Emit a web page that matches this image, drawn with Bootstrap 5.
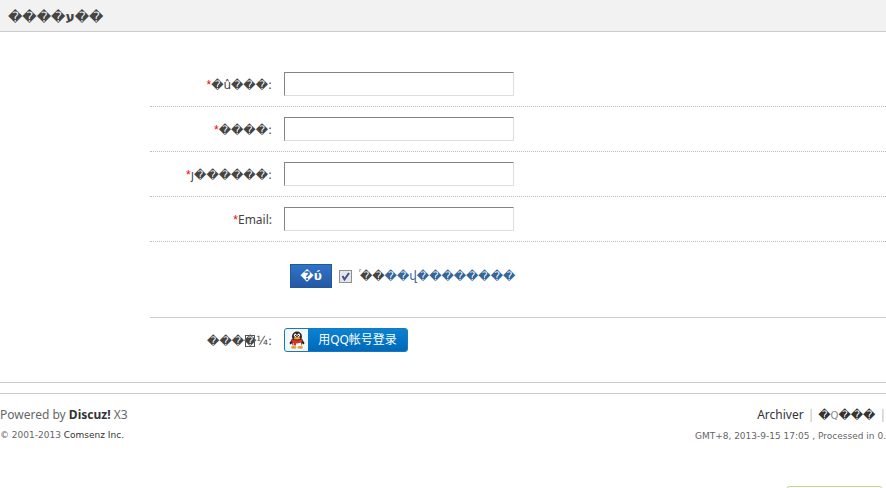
<!DOCTYPE html>
<html lang="zh-CN">
<head>
<meta charset="utf-8">
<meta name="viewport" content="width=device-width, initial-scale=1">
<title>Discuz!</title>
<link rel="stylesheet" href="https://cdn.jsdelivr.net/npm/bootstrap@5.3.0/dist/css/bootstrap.min.css">
<style>
body{font:12px/18px "Noto Sans","DejaVu Sans","Noto Sans CJK SC",sans-serif;color:#444;background:#fff;overflow:hidden}
.uni{font-family:"DejaVu Sans","Noto Sans",sans-serif}
.page-head{background:#f2f2f2;border-bottom:1px solid #cdcdcd;height:32px}
.page-head h1{font:14px/34px "DejaVu Sans",sans-serif;color:#444}
.reg-form{margin-left:150px;padding-top:30px}
.form-row{border-bottom:1px dotted #bbb;padding:10px 0}
.field-label{width:122px;margin-right:12px;padding-top:1px;text-align:right;white-space:nowrap}
.req{color:#e00;font-family:"Liberation Sans",sans-serif}
.field-input{width:230px;height:24px;border:1px solid;border-color:#848484 #ddd #ddd #848484;padding:2px 4px;background:#fff}
.submit-row{padding:22px 0 29px 140px;border-bottom:1px solid #cdcdcd}
.btn-reg{width:42px;height:24px;background:linear-gradient(#2f74c8,#2458a4);border:1px solid #235994;color:#fff;font:bold 12px/20px "DejaVu Sans",sans-serif;padding:0}
.agree-box{appearance:none;width:13px;height:13px;border:1px solid #8e8f8f;margin:0 8px 0 7px}
.agree-box:checked{background:#e4e6ec url("data:image/svg+xml,%3Csvg xmlns='http://www.w3.org/2000/svg' viewBox='0 0 11 11'%3E%3Cpath d='M2.5 5l2 3.5L9 2' fill='none' stroke='%23435089' stroke-width='2'/%3E%3C/svg%3E")}
.agree-link{color:#369}
.boxed{outline:1px solid #555;outline-offset:-2px}
.qq-row{padding-top:10px}
.btn-qq{height:24px;width:124px;border:1px solid #1a78b8;border-radius:3px;background:linear-gradient(#0a82d4,#0068b8);color:#fff;padding:0;font:12px/22px "Noto Sans","Noto Sans CJK SC",sans-serif;overflow:hidden}
.qq-icon{width:23px;height:22px;background:#eff7fd}
.foot-rule{height:11px;border-top:1px solid #cdcdcd;margin-top:30px}
.page-foot{border-top:1px solid #cdcdcd;padding-top:11px;white-space:nowrap}
.foot-text{line-height:20px;color:#666}
.foot-small{font:9px/20px "DejaVu Sans",sans-serif;color:#666}
.page-foot a,.page-foot b{color:#333;text-decoration:none}
.pipe{color:#bbb;margin-left:4px}
.pipe + a{margin-left:4px}
.ring{font-size:10px;color:#888}
.tip-box{width:99px;height:24px;right:2px;top:486px;border:1px solid #c5d295;border-radius:5px;background:#fcfef0}
</style>
<script src="https://cdn.jsdelivr.net/npm/bootstrap@5.3.0/dist/js/bootstrap.bundle.min.js"></script>
</head>
<body>
<header class="page-head"><h1 class="m-0 ps-2">����<b>ע</b>��</h1></header>
<main>
<form class="reg-form" onsubmit="return false">
<div class="form-row d-flex align-items-center"><label class="field-label uni" for="f1"><span class="req">*</span>�û���:</label><input class="field-input" id="f1" type="text"></div>
<div class="form-row d-flex align-items-center"><label class="field-label uni" for="f2"><span class="req">*</span>����:</label><input class="field-input" id="f2" type="password"></div>
<div class="form-row d-flex align-items-center"><label class="field-label uni" for="f3"><span class="req">*</span>ȷ������:</label><input class="field-input" id="f3" type="password"></div>
<div class="form-row d-flex align-items-center"><label class="field-label" for="f4"><span class="req">*</span>Email:</label><input class="field-input" id="f4" type="text"></div>
<div class="submit-row d-flex align-items-center"><button class="btn-reg" type="submit">�ύ</button><input class="agree-box" id="agree" type="checkbox" checked><label class="uni text-nowrap" for="agree">ͬ��<a class="agree-link text-decoration-none" href="#">��վ��������</a></label></div>
<div class="qq-row d-flex align-items-center"><span class="field-label uni">���<span class="boxed">�</span>¼:</span><button class="btn-qq d-flex" type="button"><span class="qq-icon d-flex align-items-center justify-content-center"><svg width="16" height="18" viewBox="0 0 16 18" aria-hidden="true"><path d="M3 8L.5 12l1 1.500L4 11M13 8l2.500 4-1 1.500L12 11" fill="#222"/><ellipse cx="8" cy="11" rx="5.500" ry="5.500" fill="#222"/><ellipse cx="8" cy="13" rx="4.400" ry="4" fill="#fff"/><ellipse cx="8" cy="5.500" rx="5" ry="5" fill="#3a2420"/><ellipse cx="6.300" cy="4.200" rx="1.300" ry="1.700" fill="#fff"/><ellipse cx="9.700" cy="4.200" rx="1.300" ry="1.700" fill="#fff"/><circle cx="6.600" cy="4.500" r=".6"/><circle cx="9.400" cy="4.500" r=".6"/><ellipse cx="8" cy="7.200" rx="3.200" ry="1.200" fill="#f5a623"/><path d="M2.600 8.300Q8 10.500 13.400 8.300v3Q10 12.600 7 12.400V14.500H4.500V12l-2-1z" fill="#d6342c"/><ellipse cx="4.800" cy="16.400" rx="2.800" ry="1.300" fill="#f09a2a"/><ellipse cx="11.200" cy="16.400" rx="2.800" ry="1.300" fill="#f09a2a"/></svg></span><span class="flex-fill">用QQ帐号登录</span></button></div>
</form>
<div class="foot-rule"></div>
</main>
<footer class="page-foot d-flex justify-content-between">
<div><div class="foot-text">Powered by <b>Discuz!</b> X3</div><div class="foot-small">© 2001-2013 <a href="#">Comsenz Inc.</a></div></div>
<div class="text-end"><div class="foot-text"><a href="#">Archiver</a><span class="pipe">|</span><a class="uni" href="#">�<span class="ring">Q</span>���</a><span class="pipe">|</span></div><div class="foot-small">GMT+8, 2013-9-15 17:05 , Processed in 0.</div></div>
</footer>
<div class="tip-box position-absolute"></div>
</body>
</html>
